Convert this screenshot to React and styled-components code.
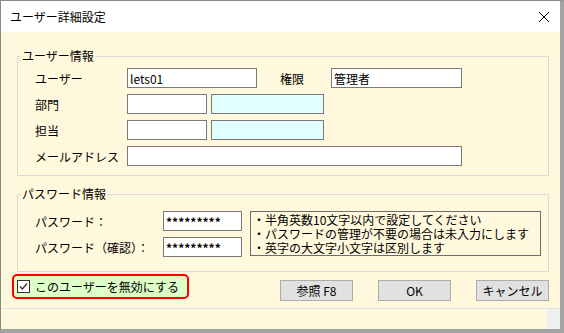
import React from 'react';
import styled, { createGlobalStyle } from "styled-components";

const GlobalStyle = createGlobalStyle`
    html, body {
        margin: 0;
        padding: 0;
        background: #ffffff;
    }
    body {
        font-family: "Noto Sans CJK JP", "Liberation Sans", sans-serif;
        font-size: 12px;
        color: #000;
    }
`;

export default function App() {
    return (
        <>
            <GlobalStyle />
            <Window>
                <TitleBar>
                    <span>ユーザー詳細設定</span>
                    <CloseIcon viewBox="0 0 12 12">
                        <path d="M1 1 L11 11 M11 1 L1 11" stroke="#000" strokeWidth="1" fill="none" />
                    </CloseIcon>
                </TitleBar>
                <Body>
                    <Group>
                        <Legend>ユーザー情報</Legend>
                        <Row>
                            <Label $w={92}>ユーザー</Label>
                            <Input $w={130} defaultValue="lets01" />
                            <Label $w={51} style={{ marginLeft: 23 }}>権限</Label>
                            <Input $w={131} defaultValue="管理者" />
                        </Row>
                        <Row>
                            <Label $w={92}>部門</Label>
                            <Input $w={80} />
                            <Input $w={113} $cyan style={{ marginLeft: 4 }} />
                        </Row>
                        <Row>
                            <Label $w={92}>担当</Label>
                            <Input $w={80} />
                            <Input $w={113} $cyan style={{ marginLeft: 4 }} />
                        </Row>
                        <Row>
                            <Label $w={92}>メールアドレス</Label>
                            <Input $w={335} />
                        </Row>
                    </Group>
                    <Group $pw>
                        <Legend>パスワード情報</Legend>
                        <PwLayout>
                            <PwFields>
                                <Row>
                                    <Label $w={128}>パスワード：</Label>
                                    <Input $w={79} $pw defaultValue="*********" />
                                </Row>
                                <Row>
                                    <Label $w={128}>パスワード（確認）：</Label>
                                    <Input $w={79} $pw defaultValue="*********" />
                                </Row>
                            </PwFields>
                            <Note>
                                <div>・半角英数10文字以内で設定してください</div>
                                <div>・パスワードの管理が不要の場合は未入力にします</div>
                                <div>・英字の大文字小文字は区別します</div>
                            </Note>
                        </PwLayout>
                    </Group>
                    <Footer>
                        <DisableBox>
                            <Check>
                                <svg viewBox="0 0 11 11" width="11" height="11">
                                    <path d="M2 5.5 L4.3 8 L9 2.5" stroke="#333" strokeWidth="1.3" fill="none" />
                                </svg>
                            </Check>
                            このユーザーを無効にする
                        </DisableBox>
                        <Buttons>
                            <Button>参照 F8</Button>
                            <Button>OK</Button>
                            <Button>キャンセル</Button>
                        </Buttons>
                    </Footer>
                </Body>
                <StatusBar>
                    <StatusMain />
                    <StatusGrip />
                </StatusBar>
            </Window>
        </>
    )
}

const Window = styled.div`
    width: 564px;
    height: 333px;
    box-sizing: border-box;
    border-left: 1px solid #8a8a8a;
    border-top: 1px solid #8a8a8a;
    border-right: 4px solid #a3a3a3;
    border-bottom: 4px solid #a3a3a3;
    display: flex;
    flex-direction: column;
    background: #fff8dc;
`;

const TitleBar = styled.div`
    height: 31px;
    flex: none;
    background: #ffffff;
    display: flex;
    align-items: center;
    justify-content: space-between;
    padding: 0 10px 0 9px;
    font-size: 12px;
`;

const CloseIcon = styled.svg`
    width: 12px;
    height: 12px;
`;

const Body = styled.div`
    height: 276px;
    flex: none;
    box-sizing: border-box;
    padding: 16px 0 0 16px;
    display: flex;
    flex-direction: column;
`;

const Group = styled.fieldset`
    width: 532px;
    box-sizing: border-box;
    margin: ${p => p.$pw ? "10px 0 0 0" : "0"};
    border: 1px solid #dadada;
    padding: ${p => p.$pw ? "9px 6px 14px 17px" : "4px 6px 9px 17px"};
    display: flex;
    flex-direction: column;
    gap: 6px;
    min-width: 0;
`;

const Legend = styled.legend`
    font-size: 12px;
    line-height: 16px;
    padding: 0 1px;
    margin-left: -14px;
`;

const Row = styled.div`
    display: flex;
    align-items: center;
    height: 20px;
`;

const Label = styled.span`
    width: ${p => p.$w}px;
    flex: none;
    font-size: 12px;
    white-space: nowrap;
`;

const Input = styled.input`
    width: ${p => p.$w}px;
    height: 20px;
    box-sizing: border-box;
    flex: none;
    margin: 0;
    border: 1px solid #7a7a7a;
    background: ${p => p.$cyan ? "#e0ffff" : "#ffffff"};
    padding: 0 2px;
    font-family: "Noto Sans CJK JP", "Liberation Sans", sans-serif;
    font-size: 12px;
    font-weight: ${p => p.$pw ? "bold" : "normal"};
    color: #000;
    outline: none;
`;

const PwLayout = styled.div`
    display: flex;
    align-items: flex-start;
`;

const PwFields = styled.div`
    display: flex;
    flex-direction: column;
    gap: 6px;
`;

const Note = styled.div`
    width: 291px;
    height: 45px;
    box-sizing: border-box;
    margin-left: 8px;
    border: 1px solid #6e6e6e;
    padding: 1px 2px 0;
    font-size: 12px;
    line-height: 14px;
    white-space: nowrap;
    overflow: hidden;
`;

const Footer = styled.div`
    display: flex;
    align-items: flex-start;
    width: 537px;
    margin: 2px 0 0 -5px;
`;

const DisableBox = styled.label`
    width: 177px;
    height: 25px;
    box-sizing: border-box;
    border: 2px solid #ff0000;
    border-radius: 5px;
    background: #ddffc8;
    display: flex;
    align-items: center;
    gap: 5px;
    padding-left: 3px;
    font-size: 12px;
    white-space: nowrap;
`;

const Check = styled.span`
    width: 13px;
    height: 13px;
    box-sizing: border-box;
    border: 1px solid #333;
    background: #ffffff;
    display: flex;
    align-items: center;
    justify-content: center;
    flex: none;
`;

const Buttons = styled.div`
    margin-left: auto;
    margin-top: 6px;
    display: flex;
    gap: 25px;
`;

const Button = styled.button`
    width: 73px;
    height: 21px;
    box-sizing: border-box;
    margin: 0;
    padding: 0;
    border: 1px solid #adadad;
    background: #e1e1e1;
    font-family: "Noto Sans CJK JP", "Liberation Sans", sans-serif;
    font-size: 12px;
    color: #000;
`;

const StatusBar = styled.div`
    flex: 1;
    border-top: 1px solid #e3e3e3;
    display: flex;
`;

const StatusMain = styled.div`
    flex: 1;
`;

const StatusGrip = styled.div`
    width: 13px;
    background: #f0f0f0;
`;
